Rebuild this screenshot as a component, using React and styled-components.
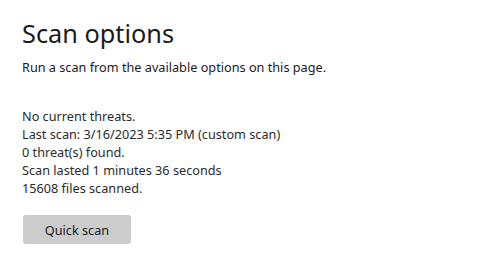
import React from 'react';
import styled, { createGlobalStyle } from 'styled-components';

const GlobalStyle = createGlobalStyle`
    html, body {
        margin: 0;
        padding: 0;
        background: #ffffff;
    }
    body {
        font-family: 'Noto Sans', 'Open Sans', sans-serif;
        color: #1b1b1b;
    }
`;

const Page = styled.div`
    display: flex;
    flex-direction: column;
    align-items: flex-start;
    width: 500px;
    height: 264px;
    padding: 17px 22px 0 22px;
    box-sizing: border-box;
    background: #ffffff;
`;

const Title = styled.h1`
    margin: 0;
    font-size: 25.3px;
    font-weight: 400;
    line-height: 32px;
    color: #1a1a1a;
`;

const Subtitle = styled.p`
    margin: 10px 0 0 0;
    font-size: 12.7px;
    line-height: 16px;
    color: #1b1b1b;
`;

const Status = styled.div`
    display: flex;
    flex-direction: column;
    margin-top: 32px;
`;

const Line = styled.div`
    font-size: 12.7px;
    line-height: 18px;
    color: #2b2b2b;
`;

const Button = styled.button`
    margin-top: 18px;
    margin-left: 1px;
    width: 108px;
    height: 29px;
    border: none;
    border-radius: 3px;
    background: #cccccc;
    font-family: inherit;
    font-size: 12.7px;
    color: #1b1b1b;
    padding: 0;
`;

const lines = [
    'No current threats.',
    'Last scan: 3/16/2023 5:35 PM (custom scan)',
    '0 threat(s) found.',
    'Scan lasted 1 minutes 36 seconds',
    '15608 files scanned.',
];

const App = () => {
    return (
        <>
            <GlobalStyle />
            <Page>
                <Title>Scan options</Title>
                <Subtitle>Run a scan from the available options on this page.</Subtitle>
                <Status>
                    {lines.map((l) => (
                        <Line key={l}>{l}</Line>
                    ))}
                </Status>
                <Button>Quick scan</Button>
            </Page>
        </>
    );
};

export default App;
